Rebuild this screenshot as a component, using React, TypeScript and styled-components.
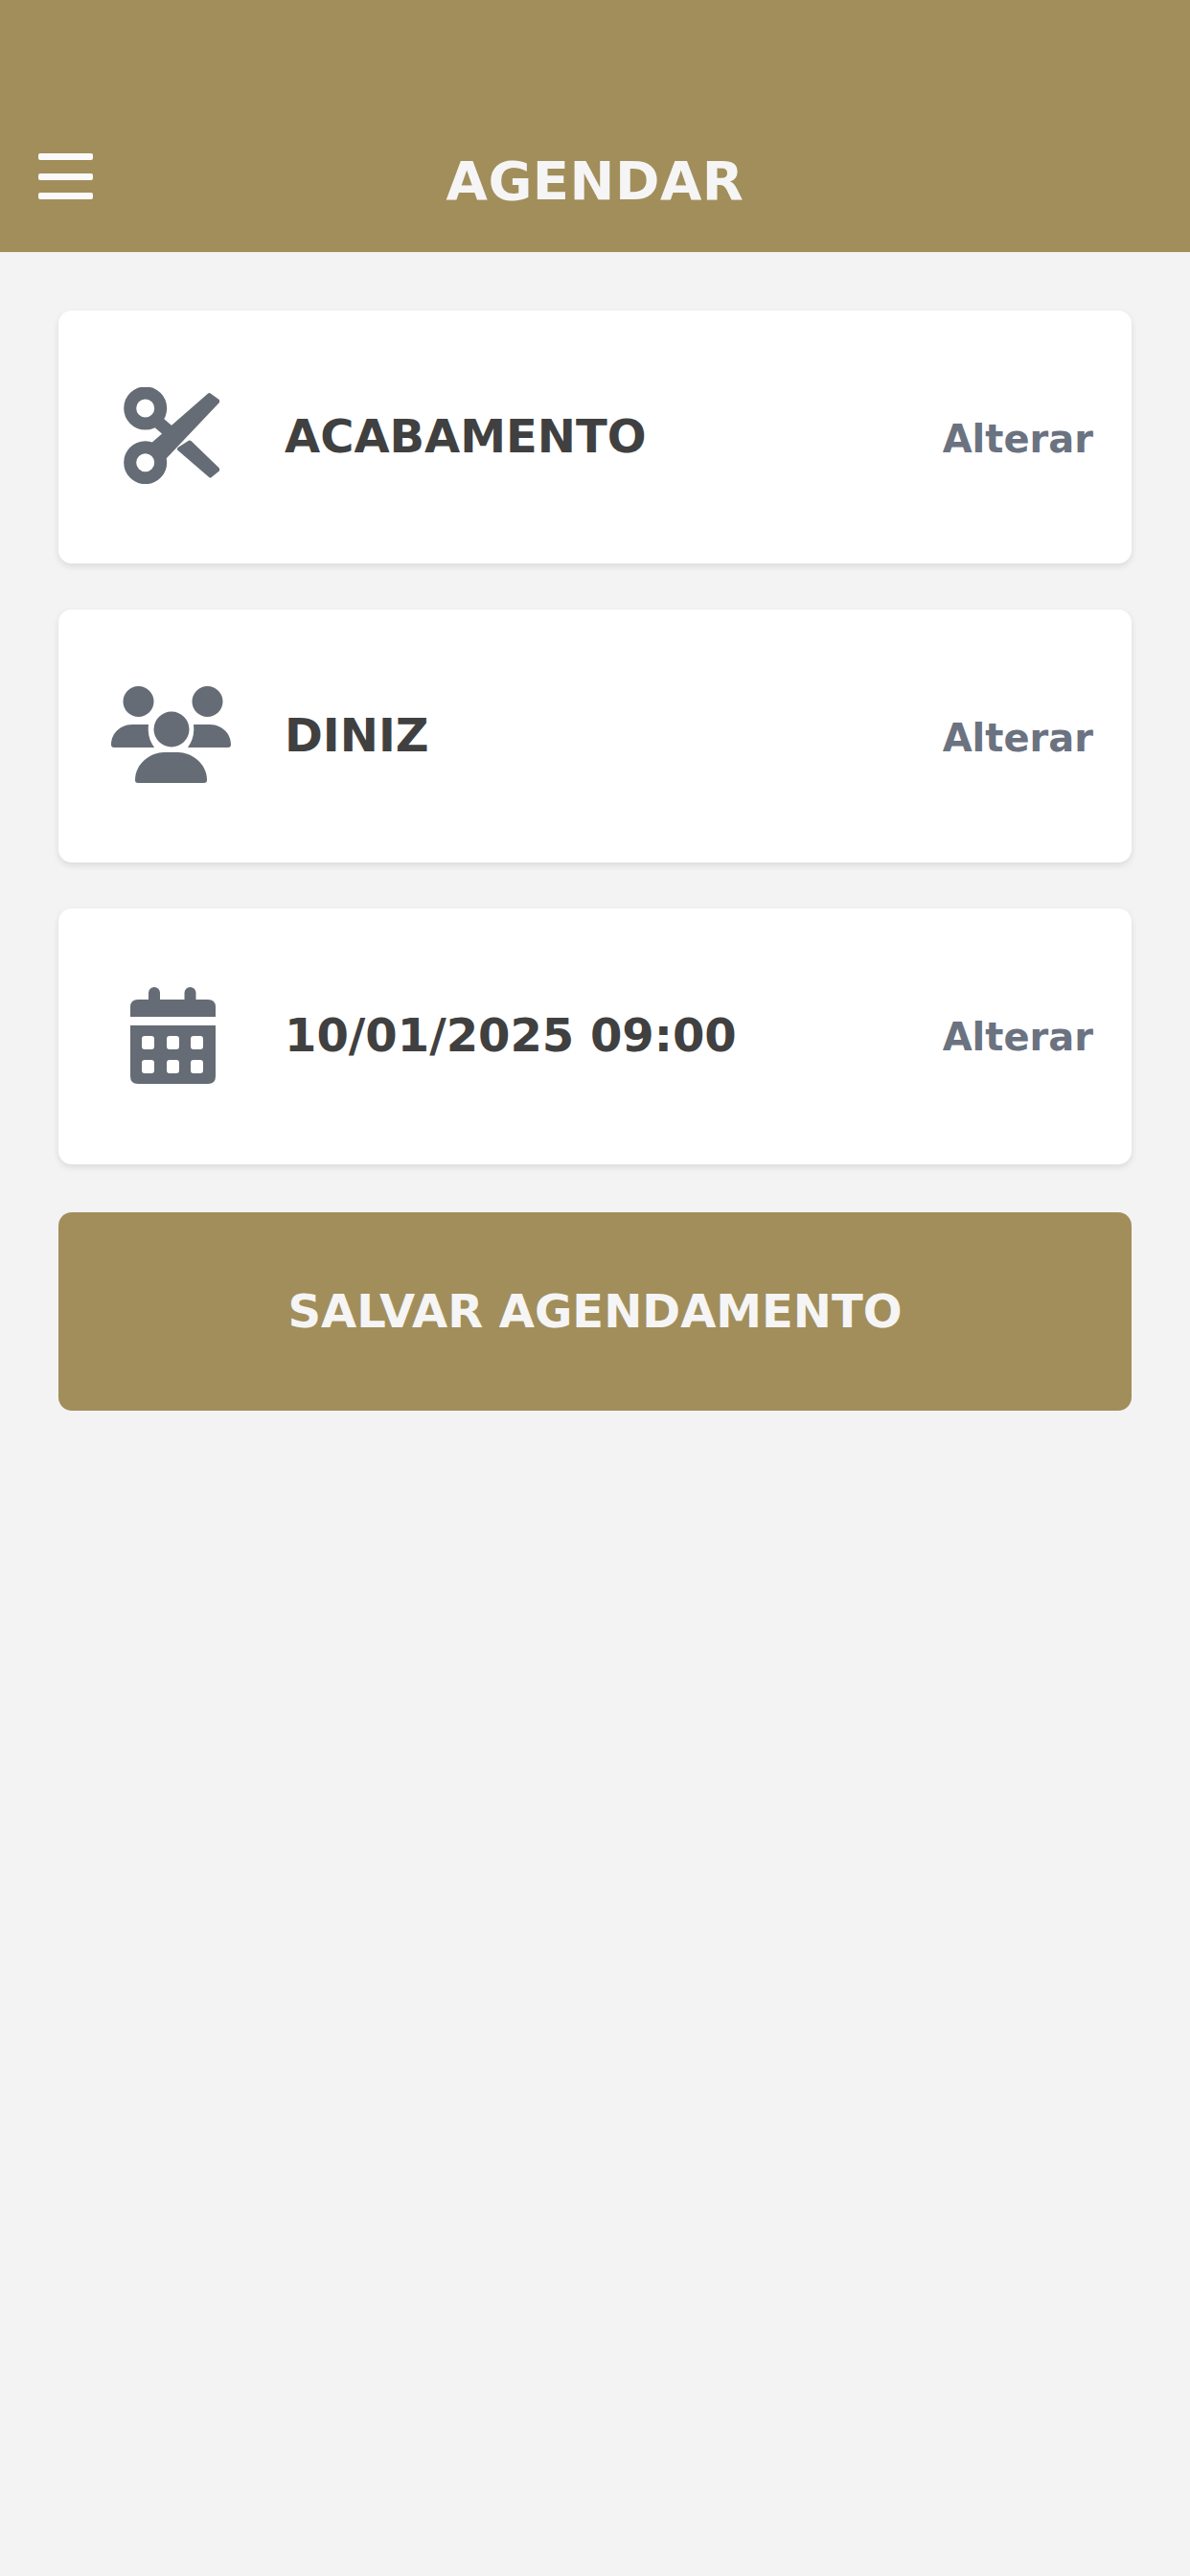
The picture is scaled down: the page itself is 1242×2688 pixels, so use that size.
import React from 'react';
import styled, { createGlobalStyle } from 'styled-components';

const GlobalStyle = createGlobalStyle`
  html, body {
    margin: 0;
    padding: 0;
    background: #f3f3f3;
  }
  * {
    box-sizing: border-box;
  }
`;

const Page = styled.div`
  min-height: 2688px;
  background: #f3f3f3;
  font-family: 'DejaVu Sans', sans-serif;
  font-weight: 700;
`;

const Header = styled.header`
  height: 263px;
  background: #a28e5b;
  display: grid;
  grid-template-columns: 1fr auto 1fr;
  align-items: start;
  padding: 160px 40px 45px;
`;

const MenuButton = styled.button`
  width: 57px;
  height: 48px;
  padding: 0;
  border: 0;
  background: none;
  display: flex;
  flex-direction: column;
  justify-content: space-between;
`;

const MenuBar = styled.span`
  display: block;
  height: 7px;
  border-radius: 2px;
  background: #fafafa;
`;

const Title = styled.h1`
  margin: 0;
  font-size: 56px;
  line-height: 58px;
  font-weight: 700;
  letter-spacing: 0.5px;
  color: #f5f5f5;
`;

const Content = styled.main`
  display: flex;
  flex-direction: column;
  gap: 48px;
  padding: 61px 61px 0;
`;

const Card = styled.section<{ $height: number }>`
  height: ${props => props.$height}px;
  padding: 0 40px 3px 55px;
  display: flex;
  align-items: center;
  background: #ffffff;
  border-radius: 14px;
  box-shadow: 0 3px 7px rgba(0, 0, 0, 0.1);
`;

const IconCell = styled.div`
  width: 125px;
  height: 101px;
  margin-right: 56px;
  display: flex;
  justify-content: center;
  color: #666c75;
`;

const Label = styled.div`
  flex: 1;
  font-size: 48px;
  color: #404040;
`;

const ChangeLink = styled.a<{ $drop: number }>`
  margin-top: ${props => props.$drop}px;
  font-size: 40px;
  color: #6b7280;
`;

const SaveButton = styled.button`
  height: 207px;
  margin-top: 2px;
  padding: 0 0 2px;
  border: 0;
  border-radius: 14px;
  background: #a28e5b;
  color: #f5f5f5;
  font-family: inherit;
  font-size: 48px;
  font-weight: 700;
`;

const CalendarSvg = styled.svg`
  margin-left: 3px;
`;

const ScissorsIcon = () => (
  <svg width="100" height="101" viewBox="0 0 100 101" fill="none" stroke="currentColor">
    <circle cx="22.7" cy="22" r="16" strokeWidth="13" />
    <circle cx="22.7" cy="78.7" r="16" strokeWidth="13" />
    <path d="M32 33 L54 52" strokeWidth="13" />
    <path
      d="M89.5 8 L98.5 14.5 L44 72 L30 60 Z"
      fill="currentColor"
      strokeWidth="4"
      strokeLinejoin="round"
    />
    <path
      d="M58 64.5 L69 57.5 L98.5 86 L90.5 92.5 Z"
      fill="currentColor"
      strokeWidth="4"
      strokeLinejoin="round"
    />
  </svg>
);

const UsersIcon = () => (
  <svg width="125" height="101" viewBox="0 0 125 101" fill="currentColor">
    <circle cx="28.5" cy="16" r="16" />
    <circle cx="100.5" cy="16" r="16" />
    <circle cx="63" cy="45" r="18.5" />
    <path d="M0 61 C0 49 10 40 22 40 H39 C38 50 40 57 45 64 H3 Q0 64 0 61Z" />
    <path d="M125 61 C125 49 115 40 103 40 H86 C87 50 85 57 80 64 H122 Q125 64 125 61Z" />
    <path d="M25 98 C25 80 42 69 55 69 H70 C83 69 100 80 100 98 Q100 101 97 101 H28 Q25 101 25 98Z" />
  </svg>
);

const CalendarIcon = () => (
  <CalendarSvg width="89" height="101" viewBox="0 0 89 101" fill="currentColor" fillRule="evenodd">
    <rect x="19" y="0" width="12" height="22" rx="6" />
    <rect x="56.5" y="0" width="12" height="22" rx="6" />
    <path d="M0 31 V21 Q0 13 8 13 H81 Q89 13 89 21 V31Z" />
    <path d="M0 40 H89 V93 Q89 101 81 101 H8 Q0 101 0 93Z
      M15 51 Q12 51 12 54 V62 Q12 65 15 65 H22 Q25 65 25 62 V54 Q25 51 22 51Z
      M41 51 Q38 51 38 54 V62 Q38 65 41 65 H48 Q51 65 51 62 V54 Q51 51 48 51Z
      M66 51 Q63 51 63 54 V62 Q63 65 66 65 H73 Q76 65 76 62 V54 Q76 51 73 51Z
      M15 76 Q12 76 12 79 V87 Q12 90 15 90 H22 Q25 90 25 87 V79 Q25 76 22 76Z
      M41 76 Q38 76 38 79 V87 Q38 90 41 90 H48 Q51 90 51 87 V79 Q51 76 48 76Z
      M66 76 Q63 76 63 79 V87 Q63 90 66 90 H73 Q76 90 76 87 V79 Q76 76 73 76Z" />
  </CalendarSvg>
);

const items = [
  { label: 'ACABAMENTO', height: 264, drop: 7, icon: <ScissorsIcon /> },
  { label: 'DINIZ', height: 264, drop: 7, icon: <UsersIcon /> },
  { label: '10/01/2025 09:00', height: 267, drop: 3, icon: <CalendarIcon /> }
];

const App: React.FC = () => {
  return (
    <Page>
      <GlobalStyle />
      <Header>
        <MenuButton aria-label="Menu">
          <MenuBar />
          <MenuBar />
          <MenuBar />
        </MenuButton>
        <Title>AGENDAR</Title>
      </Header>
      <Content>
        {items.map(item => (
          <Card key={item.label} $height={item.height}>
            <IconCell>{item.icon}</IconCell>
            <Label>{item.label}</Label>
            <ChangeLink $drop={item.drop}>Alterar</ChangeLink>
          </Card>
        ))}
        <SaveButton>SALVAR AGENDAMENTO</SaveButton>
      </Content>
    </Page>
  );
};

export default App;
